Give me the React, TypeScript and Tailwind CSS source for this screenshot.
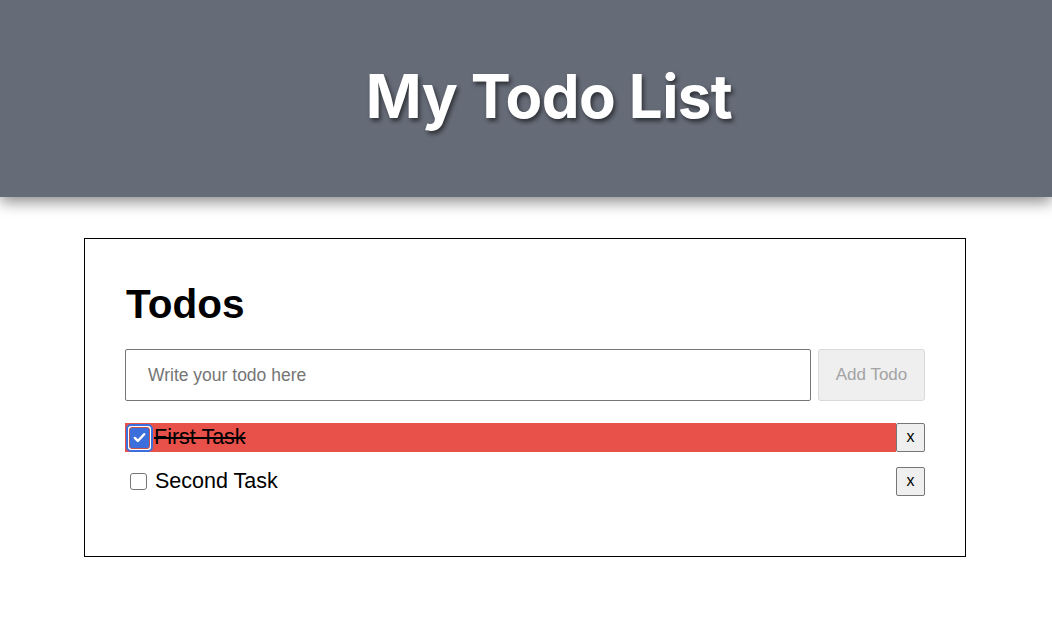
import React, { useState } from "react";

interface Todo {
  id: number;
  text: string;
  done: boolean;
}

const initialTodos: Todo[] = [
  { id: 1, text: "First Task", done: true },
  { id: 2, text: "Second Task", done: false },
];

const Check = ({ checked, focused }: { checked: boolean; focused?: boolean }) => {
  if (checked) {
    return (
      <span
        className={`ml-[1px] flex h-[28px] w-[27px] shrink-0 items-center justify-center rounded-[5px] bg-white p-[1px] ${
          focused ? "border-2 border-[#3d6fdc]" : ""
        }`}
      >
        <span className="flex h-full w-full items-center justify-center rounded-[3px] border border-[#c9514b] bg-[#3d6fdc]">
          <svg viewBox="0 0 16 16" className="h-[15px] w-[15px]">
            <path d="M3 8.5l3.2 3.2L13 4.5" fill="none" stroke="white" strokeWidth="2.6" strokeLinecap="round" strokeLinejoin="round" />
          </svg>
        </span>
      </span>
    );
  }
  return <span className="ml-[5px] mr-[8px] h-[17px] w-[17px] shrink-0 rounded-[3px] border border-[#767676] bg-white" />;
};

export default function App() {
  const [todos, setTodos] = useState<Todo[]>(initialTodos);
  const [draft, setDraft] = useState("");

  const toggle = (id: number) =>
    setTodos(todos.map(t => (t.id === id ? { ...t, done: !t.done } : t)));

  const remove = (id: number) => setTodos(todos.filter(t => t.id !== id));

  const add = () => {
    if (!draft.trim()) return;
    setTodos([...todos, { id: Date.now(), text: draft.trim(), done: false }]);
    setDraft("");
  };

  return (
    <div className="min-h-[640px] bg-white font-['Liberation_Sans',Arial,sans-serif] text-black">
      {/* Header */}
      <header className="relative flex h-[197px] items-center justify-center bg-[#656b77] pl-[46px] shadow-[0_5px_14px_rgba(0,0,0,0.45)]">
        <h1 className="pb-[6px] font-['Inter',sans-serif] text-[60px] font-bold tracking-[-0.6px] text-white [text-shadow:2px_3px_4px_rgba(0,0,0,0.55)]">
          My Todo List
        </h1>
      </header>

      {/* Card */}
      <main className="ml-[84px] mt-[41px] w-[882px] border border-black px-[40px] pb-[60px] pt-[42px]">
        <h2 className="pl-[1px] text-[40.5px] font-bold leading-[46px]">Todos</h2>

        <div className="mt-[22px] flex gap-[7px]">
          <input
            value={draft}
            onChange={e => setDraft(e.target.value)}
            placeholder="Write your todo here"
            className="h-[52px] flex-1 rounded-[2px] border border-[#767676] px-[22px] text-[17.5px] outline-none placeholder:text-[#757575]"
          />
          <button
            onClick={add}
            disabled={!draft.trim()}
            className="h-[52px] w-[107px] rounded-[3px] border border-[#d9d9d9] bg-[#efefef] text-[17px] text-[#a3a3a3]"
          >
            Add Todo
          </button>
        </div>

        <ul className="mt-[22px] flex flex-col gap-[15px]">
          {todos.map((todo, i) => (
            <li key={todo.id} className="flex h-[29px] items-center">
              <label
                onClick={() => toggle(todo.id)}
                className={`flex h-[29px] flex-1 cursor-pointer items-center ${todo.done ? "bg-[#e8504a]" : ""}`}
              >
                <Check checked={todo.done} focused={i === 0} />
                <span className={`text-[21.5px] leading-none ${todo.done ? "ml-[1px] line-through" : ""}`}>{todo.text}</span>
              </label>
              <button
                onClick={() => remove(todo.id)}
                className="h-[29px] w-[29px] rounded-[2px] border border-[#767676] bg-[#efefef] pb-[2px] text-[16px]"
              >
                x
              </button>
            </li>
          ))}
        </ul>
      </main>
    </div>
  );
}
